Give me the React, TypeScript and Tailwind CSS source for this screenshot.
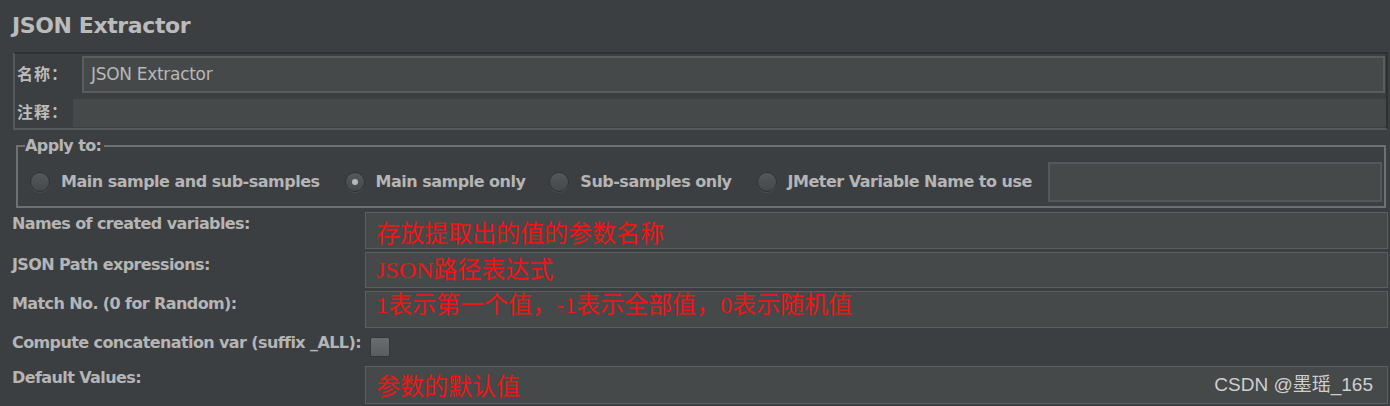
import React from 'react'

const sans = { fontFamily: '"DejaVu Sans", "Noto Sans CJK SC", sans-serif' }

function Radio({ checked = false, label }: { checked?: boolean; label: string }) {
  return (
    <div className="flex items-center">
      <span className="flex h-[20px] w-[20px] shrink-0 items-center justify-center rounded-full border border-[#2f3133] bg-gradient-to-b from-[#55585a] to-[#46494b] shadow-[0_1px_0_#4d5052]">
        {checked && <span className="h-[6px] w-[6px] rounded-full bg-[#b8b8b8]" />}
      </span>
      <span className="ml-[11px] text-[16px] font-bold tracking-[-0.5px] text-[#b5b5b5]">{label}</span>
    </div>
  )
}

function Field({ label, value, height = 'h-[36px]', pad = 'pt-[8px]', labelPad = 'pt-[3px]' }: {
  label: string
  value: string
  height?: string
  pad?: string
  labelPad?: string
}) {
  return (
    <div className="flex items-start">
      <div className={`w-[353px] shrink-0 text-[16px] font-bold tracking-[-0.6px] text-[#b5b5b5] ${labelPad}`}>{label}</div>
      <div
        className={`flex-1 ${height} ${pad} border border-[#5c5f60] bg-[#45494a] pl-[10px] text-[24px] leading-[26px] text-[#f01414]`}
        style={{ fontFamily: '"Liberation Serif", "Noto Sans CJK SC", serif' }}
      >
        {value}
      </div>
    </div>
  )
}

export default function App() {
  return (
    <div className="relative h-[406px] w-full overflow-hidden bg-[#3c3f41] pl-[12px] pr-[2px] pt-[12px]" style={sans}>
      <h1 className="text-[22px] font-bold leading-[28px] tracking-[-0.4px] text-[#bbbbbb]">JSON Extractor</h1>

      <div className="mt-[12px] ml-[1px] border-2 border-t-[#2e3032] border-l-[#56595a] border-b-[#56595a] border-r-[#2e3032] pb-[1px]">
        <div className="flex items-center pt-[2px] pr-[1px]">
          <span className="w-[67px] shrink-0 pl-[2px] text-[16px] font-bold tracking-[1px] text-[#bbbbbb]">名称：</span>
          <div className="flex h-[37px] flex-1 items-center border-2 border-[#5a5d5e] bg-[#45494a] pl-[7px] text-[17px] tracking-[-0.3px] text-[#b8b8b8]">
            JSON Extractor
          </div>
        </div>
        <div className="mt-[6px] flex items-center">
          <span className="w-[58px] shrink-0 pl-[2px] text-[16px] font-bold tracking-[1px] text-[#bbbbbb]">注释：</span>
          <div className="h-[28px] flex-1 bg-[#45494a]" />
        </div>
      </div>

      <fieldset className="mt-[8px] ml-[4px] mr-[2px] h-[70px] border-2 border-[#6e7172] pl-[7px] pr-[2px]">
        <legend className="pr-[3px] text-[16px] font-bold leading-[16px] tracking-[-0.6px] text-[#b5b5b5]">Apply to:</legend>
        <div className="flex items-center pl-[5px] pt-[8px]">
          <Radio label="Main sample and sub-samples" />
          <div className="ml-[25px]"><Radio checked label="Main sample only" /></div>
          <div className="ml-[24px]"><Radio label="Sub-samples only" /></div>
          <div className="ml-[25px]"><Radio label="JMeter Variable Name to use" /></div>
          <div className="ml-[16px] h-[40px] flex-1 border-2 border-[#55585a] bg-[#45494a]" />
        </div>
      </fieldset>

      <div className="mt-[4px] flex flex-col gap-[3px]">
        <Field label="Names of created variables:" value="存放提取出的值的参数名称" height="h-[37px]" pad="pt-[8px]" labelPad="pt-[0px]" />
        <Field label="JSON Path expressions:" value="JSON路径表达式" height="h-[36px]" pad="pt-[4px]" labelPad="pt-[1px]" />
        <Field label="Match No. (0 for Random):" value="1表示第一个值，-1表示全部值，0表示随机值" height="h-[37px]" pad="pt-[0px]" labelPad="pt-[1px]" />
        <div className="flex h-[32px] items-start">
          <span className="text-[16px] font-bold tracking-[-0.6px] text-[#b5b5b5]">Compute concatenation var (suffix _ALL):</span>
          <span className="ml-[9px] mt-[6px] h-[20px] w-[20px] rounded-[2px] border border-[#333537] bg-gradient-to-b from-[#6a6d6f] to-[#5a5d5f]" />
        </div>
        <Field label="Default Values:" value="参数的默认值" height="h-[38px]" pad="pt-[7px]" labelPad="pt-[0px]" />
      </div>

      <span className="absolute bottom-[7px] right-[17px] text-[19px] text-[#cfcfcf]" style={{ fontFamily: '"Liberation Sans", "Noto Sans CJK SC", sans-serif' }}>
        CSDN @墨瑶_165
      </span>
    </div>
  )
}
